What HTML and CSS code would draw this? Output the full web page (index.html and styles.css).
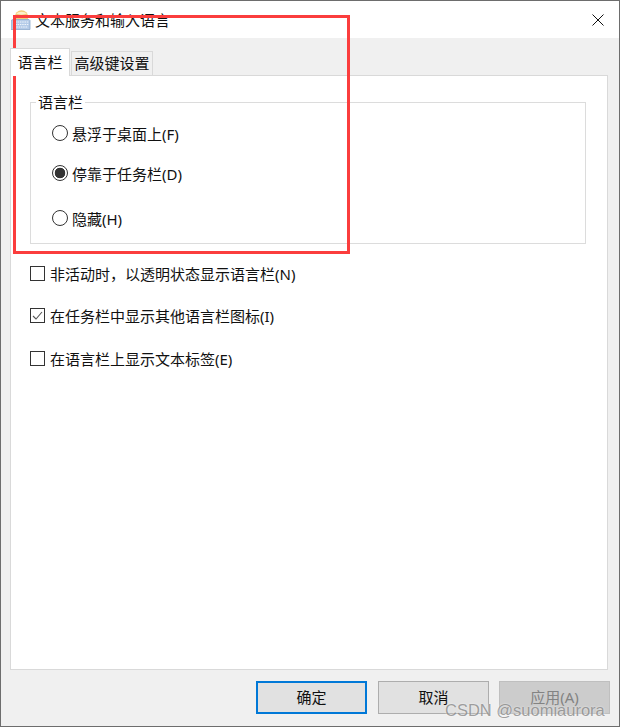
FILE: index.html
```html
<!DOCTYPE html>
<html lang="zh-CN">
<head>
<meta charset="utf-8">
<title>文本服务和输入语言</title>
<link rel="stylesheet" href="styles.css">
</head>
<body>
<div class="window">
	<div class="titlebar">
		<svg class="app-icon" width="20" height="20" viewBox="0 0 20 20">
			<circle cx="10.5" cy="7" r="6.800" fill="#f4cd78"/>
			<path d="M5 3.500a7 4.500 0 0 1 11 0a8 3.500 0 0 1-11 0z" fill="#fcf0cc"/>
			<path d="M2 9.500h16l1 1v9H0v-9z" fill="#b4cbe8" stroke="#8ea9cc" stroke-width=".8"/>
			<path d="M2 12h16M2 14.500h16M3 17h14" stroke="#eef4fb" stroke-width="1.200" stroke-dasharray="1.500 .8"/>
		</svg>
		<span class="title">文本服务和输入语言</span>
		<svg class="close" width="12" height="12" viewBox="0 0 12 12">
			<path d="M.5 .5l11 11M11.500 .5l-11 11" stroke="#111" stroke-width="1" fill="none"/>
		</svg>
	</div>

	<div class="body">
		<div class="tabs">
			<div class="tab active">语言栏</div>
			<div class="tab">高级键设置</div>
		</div>
		<div class="panel">
			<fieldset class="group">
				<legend>语言栏</legend>
				<div class="option"><span class="radio"></span>悬浮于桌面上(F)</div>
				<div class="option"><span class="radio checked"></span>停靠于任务栏(D)</div>
				<div class="option last"><span class="radio"></span>隐藏(H)</div>
			</fieldset>
			<div class="checks">
				<div class="check-row"><span class="checkbox"></span>非活动时，以透明状态显示语言栏(N)</div>
				<div class="check-row"><span class="checkbox">
					<svg width="13" height="13" viewBox="0 0 13 13"><path d="M2 7l3 3 6-7" stroke="#555" stroke-width="1.100" fill="none"/></svg>
				</span>在任务栏中显示其他语言栏图标(I)</div>
				<div class="check-row"><span class="checkbox"></span>在语言栏上显示文本标签(E)</div>
			</div>
		</div>
		<div class="buttons">
			<div class="btn default">确定</div>
			<div class="btn">取消</div>
			<div class="btn disabled">应用(A)</div>
		</div>
	</div>

	<div class="annotation"></div>
	<div class="watermark">CSDN @suomiaurora</div>
</div>
</body>
</html>
```
FILE: styles.css
```css
* {
	margin: 0;
	padding: 0;
	box-sizing: border-box;
}
body {
	font-family: "Noto Sans", "Noto Sans CJK SC", sans-serif;
	font-size: 15px;
	color: #111;
	background: #f0f0f0;
}
.window {
	position: relative;
	width: 620px;
	height: 727px;
	border: 1px solid #6d6d6d;
	display: flex;
	flex-direction: column;
	overflow: hidden;
}
.titlebar {
	height: 37px;
	flex: none;
	background: white;
	display: flex;
	align-items: center;
	padding: 0 15px 0 10px;
}
.app-icon {
	flex: none;
	margin-right: 4px;
}
.title {
	flex: 1;
	line-height: 36px;
}
.close {
	flex: none;
}
.body {
	flex: 1;
	background: #f0f0f0;
	padding: 10px 9px 0 9px;
	display: flex;
	flex-direction: column;
}
.tabs {
	display: flex;
	align-items: flex-end;
	height: 27px;
	flex: none;
	position: relative;
	z-index: 1;
}
.tab {
	height: 24px;
	line-height: 23px;
	margin-left: 1px;
	width: 82px;
	text-align: center;
	white-space: nowrap;
	background: #f0f0f0;
	border: 1px solid #d9d9d9;
	border-bottom: none;
}
.tab.active {
	height: 28px;
	margin-bottom: -1px;
	margin-left: 0;
	width: 60px;
	line-height: 26px;
	background: white;
}
.panel {
	height: 595px;
	flex: none;
	margin-right: 2px;
	background: white;
	border: 1px solid #d9d9d9;
	padding: 16px 21px 0 19px;
}
.group {
	height: 152px;
	border: 1px solid #dcdcdc;
	padding: 0 0 0 21px;
}
.group legend {
	margin-left: -16px;
	padding: 0 2px;
	line-height: 20px;
}
.option {
	display: flex;
	align-items: center;
	height: 30px;
	margin-top: 10px;
}
.option:first-of-type {
	margin-top: 6px;
}
.option.last {
	margin-top: 15px;
}
.radio {
	width: 16px;
	height: 16px;
	margin-right: 4px;
	border: 1px solid #333;
	border-radius: 50%;
	background: white;
	flex: none;
}
.radio.checked {
	background: radial-gradient(circle, #333 0, #333 5px, white 5.600px);
}
.checks {
	margin-top: 14px;
}
.check-row {
	display: flex;
	align-items: center;
	height: 30px;
	margin-bottom: 12px;
}
.check-row:nth-child(2) {
	margin-bottom: 13px;
}
.checkbox {
	width: 15px;
	height: 15px;
	margin-right: 5px;
	border: 1px solid #333;
	background: white;
	flex: none;
	display: flex;
}
.buttons {
	display: flex;
	justify-content: flex-end;
	gap: 11px;
	margin-top: 11px;
}
.btn {
	width: 111px;
	height: 33px;
	line-height: 31px;
	text-align: center;
	background: #e1e1e1;
	border: 1px solid #adadad;
}
.btn.default {
	border: 2px solid #0078d7;
	line-height: 29px;
}
.btn.disabled {
	margin-left: -1px;
	background: #cccccc;
	border-color: #bfbfbf;
	color: #838383;
}
.annotation {
	position: absolute;
	left: 12px;
	top: 14px;
	width: 337px;
	height: 239px;
	border: 3px solid #fb3d3d;
}
.watermark {
	position: absolute;
	left: 444px;
	top: 700px;
	font-family: "Liberation Sans", sans-serif;
	font-size: 16.500px;
	color: rgba(120, 120, 120, 0.7);
	text-shadow: 0 0 2px rgba(255, 255, 255, 0.8);
	white-space: nowrap;
}
```
